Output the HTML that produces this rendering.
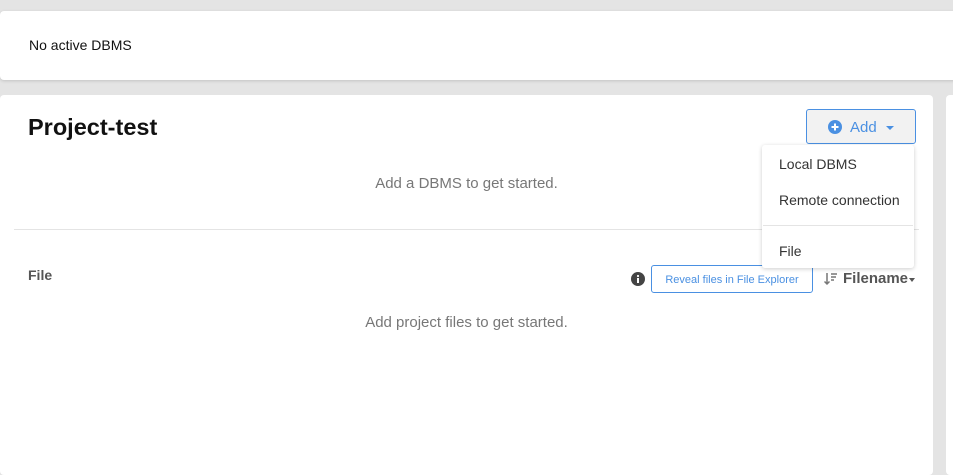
<!DOCTYPE html>
<html><head><style>
body{margin:0;width:953px;height:466px;background:#e4e4e4;font-family:"Liberation Sans",sans-serif;position:relative;overflow:hidden}
.a{position:absolute}
</style></head><body>
<div class="a" style="left:0;top:11px;width:960px;height:69px;background:#fff;border-radius:4px;box-shadow:0 1px 3px rgba(0,0,0,.15)"></div>
<div class="a" style="left:29px;top:37px;font-size:14px;color:#111">No active DBMS</div>
<div class="a" style="left:0;top:95px;width:933px;height:380px;background:#fff;border-radius:4px"></div>
<div class="a" style="left:946px;top:95px;width:20px;height:380px;background:#fff;border-radius:4px"></div>
<div class="a" style="left:28px;top:114px;font-size:23.5px;font-weight:bold;color:#111">Project-test</div>
<div class="a" style="left:806px;top:109px;width:110px;height:35px;border:1px solid #4a90e2;border-radius:3px;background:#f2f2f2;box-sizing:border-box"></div>
<svg class="a" style="left:828px;top:120px" width="14" height="14"><circle cx="7" cy="7" r="7" fill="#4a90e2"/><path d="M7 3.5v7M3.5 7h7" stroke="#fff" stroke-width="2"/></svg>
<div class="a" style="left:850px;top:119px;font-size:15px;color:#4a90e2">Add</div>
<div class="a" style="left:886px;top:126px;border:4px solid transparent;border-top:4px solid #4a90e2"></div>
<div class="a" style="left:0;top:175px;width:933px;text-align:center;font-size:15px;color:#777">Add a DBMS to get started.</div>
<div class="a" style="left:14px;top:229px;width:905px;height:1px;background:#e4e4e4"></div>
<div class="a" style="left:28px;top:267px;font-size:14px;font-weight:bold;color:#555">File</div>
<svg class="a" style="left:631px;top:272px" width="14" height="14"><circle cx="7" cy="7" r="7" fill="#444"/><rect x="6" y="6" width="2" height="5" fill="#fff"/><circle cx="7" cy="4" r="1.1" fill="#fff"/></svg>
<div class="a" style="left:651px;top:265px;width:162px;height:28px;border:1px solid #4a90e2;border-radius:3px;box-sizing:border-box;font-size:11px;color:#4a90e2;text-align:center;line-height:28px">Reveal files in File Explorer</div>
<svg class="a" style="left:824px;top:272px" width="14" height="14"><path d="M3 1v11M0.5 9.5L3 12l2.5-2.5M7 2h6M7 5h5M7 8h3" stroke="#777" stroke-width="1.5" fill="none"/></svg>
<div class="a" style="left:843px;top:270px;font-size:15px;font-weight:bold;color:#555">Filename</div>
<div class="a" style="left:909px;top:278px;border:3.5px solid transparent;border-top:4px solid #555"></div>
<div class="a" style="left:0;top:314px;width:933px;text-align:center;font-size:15px;color:#777">Add project files to get started.</div>
<div class="a" style="left:762px;top:145px;width:152px;height:123px;background:#fff;border-radius:3px;box-shadow:0 1px 4px rgba(0,0,0,.2)"></div>
<div class="a" style="left:779px;top:156px;font-size:14px;color:#333">Local DBMS</div>
<div class="a" style="left:779px;top:192px;font-size:14px;color:#333">Remote connection</div>
<div class="a" style="left:763px;top:225px;width:150px;height:1px;background:#e4e4e4"></div>
<div class="a" style="left:779px;top:243px;font-size:14px;color:#333">File</div>
</body></html>
